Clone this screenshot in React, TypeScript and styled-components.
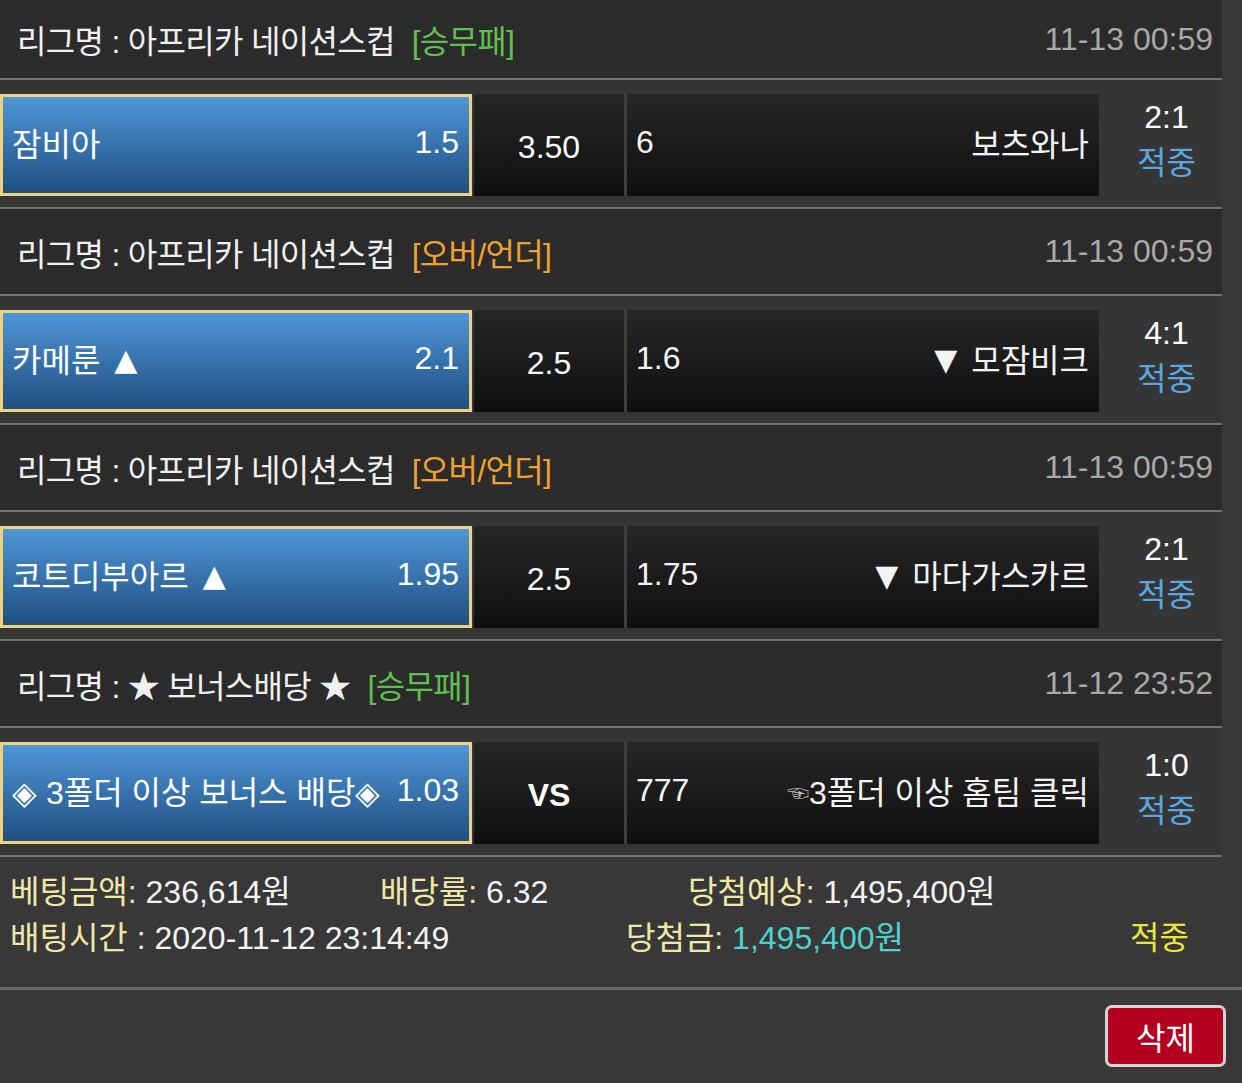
import styled, { createGlobalStyle } from "styled-components";

type Game = {
  id: number;
  league: string;
  tag: string;
  tagColor: "green" | "orange";
  time: string;
  home: string;
  homeMark?: string;
  homeOdds: string;
  draw: string;
  drawBold?: boolean;
  awayOdds: string;
  away: string;
  awayMark?: string;
  pointer?: boolean;
  score: string;
};

const games: Game[] = [
  {
    id: 1,
    league: "리그명 : 아프리카 네이션스컵",
    tag: "[승무패]",
    tagColor: "green",
    time: "11-13 00:59",
    home: "잠비아",
    homeOdds: "1.5",
    draw: "3.50",
    awayOdds: "6",
    away: "보츠와나",
    score: "2:1",
  },
  {
    id: 2,
    league: "리그명 : 아프리카 네이션스컵",
    tag: "[오버/언더]",
    tagColor: "orange",
    time: "11-13 00:59",
    home: "카메룬",
    homeMark: "▲",
    homeOdds: "2.1",
    draw: "2.5",
    awayOdds: "1.6",
    away: "모잠비크",
    awayMark: "▼",
    score: "4:1",
  },
  {
    id: 3,
    league: "리그명 : 아프리카 네이션스컵",
    tag: "[오버/언더]",
    tagColor: "orange",
    time: "11-13 00:59",
    home: "코트디부아르",
    homeMark: "▲",
    homeOdds: "1.95",
    draw: "2.5",
    awayOdds: "1.75",
    away: "마다가스카르",
    awayMark: "▼",
    score: "2:1",
  },
  {
    id: 4,
    league: "리그명 : ★ 보너스배당 ★",
    tag: "[승무패]",
    tagColor: "green",
    time: "11-12 23:52",
    home: "◈ 3폴더 이상 보너스 배당◈",
    homeOdds: "1.03",
    draw: "VS",
    drawBold: true,
    awayOdds: "777",
    away: "3폴더 이상 홈팀 클릭",
    pointer: true,
    score: "1:0",
  },
];

const App = () => (
  <>
    <GlobalStyle />
    <Page>
      <List>
        {games.map((g) => (
          <div key={g.id}>
            <Header>
              <League>
                {g.league}
                <Tag $color={g.tagColor}>{g.tag}</Tag>
              </League>
              <Time>{g.time}</Time>
            </Header>
            <MatchRow>
              <HomeCell>
                <span>
                  {g.home}
                  {g.homeMark && <Mark $side="home">{g.homeMark}</Mark>}
                </span>
                <span>{g.homeOdds}</span>
              </HomeCell>
              <DrawCell $bold={g.drawBold}>{g.draw}</DrawCell>
              <AwayCell>
                <span>{g.awayOdds}</span>
                <span>
                  {g.pointer && <Pointer>☜</Pointer>}
                  {g.awayMark && <Mark $side="away">{g.awayMark}</Mark>}
                  {g.away}
                </span>
              </AwayCell>
              <ScoreCell>
                <span>{g.score}</span>
                <Result>적중</Result>
              </ScoreCell>
            </MatchRow>
          </div>
        ))}
      </List>
      <Summary>
        <SummaryRow>
          <Item $w={370}>
            <Label>베팅금액:</Label> 236,614원
          </Item>
          <Item $w={308}>
            <Label>배당률:</Label> 6.32
          </Item>
          <Item>
            <Label>당첨예상:</Label> 1,495,400원
          </Item>
        </SummaryRow>
        <SummaryRow>
          <Item $w={616}>
            <Label>배팅시간</Label> : 2020-11-12 23:14:49
          </Item>
          <Item $w={504}>
            <Label>당첨금:</Label> <Won>1,495,400원</Won>
          </Item>
          <Item>
            <Hit>적중</Hit>
          </Item>
        </SummaryRow>
      </Summary>
      <Footer>
        <DeleteButton>삭제</DeleteButton>
      </Footer>
    </Page>
  </>
);

export default App;

const fontStack = `"Liberation Sans", "Noto Sans CJK KR", sans-serif`;

const GlobalStyle = createGlobalStyle`
  body {
    margin: 0;
    background: #383838;
    font-family: ${fontStack};
    color: #f2f2f2;
  }
`;

const Page = styled.div`
  width: 1242px;
  min-height: 1083px;
  background: #383838;
  overflow: hidden;
`;

const List = styled.div`
  width: 1222px;

  & > div:first-child > div:first-child {
    height: 80px;
  }
`;

const Header = styled.div`
  height: 87px;
  display: flex;
  align-items: center;
  justify-content: space-between;
  padding: 0 9px 0 17px;
  background: #2b2b2b;
  border-bottom: 2px solid #727272;
  box-sizing: border-box;
  font-size: 32px;
`;

const League = styled.div`
  display: flex;
  gap: 17px;
  color: #f0f0f0;
  letter-spacing: -0.7px;
`;

const Tag = styled.span<{ $color: "green" | "orange" }>`
  color: ${(p) => (p.$color === "green" ? "#5fbf4f" : "#f0a030")};
`;

const Time = styled.div`
  color: #a8a8a8;
`;

const MatchRow = styled.div`
  height: 129px;
  display: flex;
  padding: 14px 0 11px;
  box-sizing: border-box;
  background: #353535;
  border-bottom: 2px solid #727272;
  font-size: 32px;
`;

const HomeCell = styled.div`
  width: 472px;
  box-sizing: border-box;
  border: 3px solid #efd27f;
  background: linear-gradient(#4f96d8, #1f4e7f);
  display: flex;
  align-items: center;
  justify-content: space-between;
  padding: 0 10px 6px 9px;
  color: #fff;
`;

const Mark = styled.span<{ $side: "home" | "away" }>`
  font-family: "DejaVu Sans", sans-serif;
  font-size: 30px;
  vertical-align: 2px;
  margin: ${(p) => (p.$side === "home" ? "0 0 0 14px" : "0 14px 0 0")};
`;

const DrawCell = styled.div<{ $bold?: boolean }>`
  width: 153px;
  margin-left: 2px;
  background: linear-gradient(#272727, #0f0f0f);
  display: flex;
  align-items: center;
  justify-content: center;
  padding-top: 4px;
  box-sizing: border-box;
  font-weight: ${(p) => (p.$bold ? 700 : 400)};
  color: #fff;
  border-right: 3px solid #3e3e3e;
`;

const AwayCell = styled.div`
  width: 472px;
  background: linear-gradient(#272727, #0f0f0f);
  display: flex;
  align-items: center;
  justify-content: space-between;
  padding: 0 10px 6px 9px;
  box-sizing: border-box;
  color: #f4f4f4;
`;

const Pointer = styled.span`
  font-size: 22px;
  color: #c8c8c8;
  vertical-align: 3px;
`;

const ScoreCell = styled.div`
  flex: 1;
  display: flex;
  flex-direction: column;
  align-items: center;
  justify-content: center;
  line-height: 46px;
  padding: 0 0 10px 12px;
  color: #fff;
`;

const Result = styled.span`
  color: #5aa6e0;
`;

const Summary = styled.div`
  padding: 12px 10px 26px;
  border-bottom: 3px solid #6a6a6a;
  font-size: 32px;
  line-height: 46px;
`;

const SummaryRow = styled.div`
  display: flex;
`;

const Item = styled.div<{ $w?: number }>`
  width: ${(p) => (p.$w ? `${p.$w}px` : "auto")};
  white-space: pre;
  color: #f4f4f4;
`;

const Label = styled.span`
  color: #f1e8a8;
`;

const Won = styled.span`
  color: #4fd1cf;
`;

const Hit = styled.span`
  color: #ece43c;
`;

const Footer = styled.div`
  display: flex;
  justify-content: flex-end;
  padding: 15px 16px 0 0;
`;

const DeleteButton = styled.button`
  width: 121px;
  height: 62px;
  border: 3px solid #d4d4d4;
  border-radius: 7px;
  background: #b3001e;
  color: #fff;
  font-family: ${fontStack};
  font-size: 32px;
  padding: 0;
`;
